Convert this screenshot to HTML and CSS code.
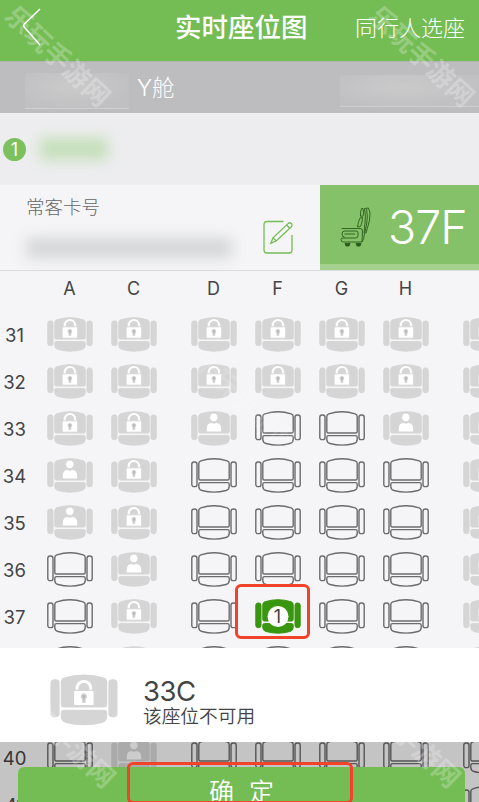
FILE: index.html
```
<!DOCTYPE html>
<html lang="zh-CN">
<head>
    <meta charset="UTF-8">
    <meta name="viewport" content="width=device-width, initial-scale=1.0">
    <title>实时座位图</title>
    <link rel="stylesheet" href="styles.css">
</head>
<body>
    <svg class="symbols">
        <symbol id="seat" viewBox="0 0 46 35">
            <rect x="0.8" y="4" width="5.2" height="24.6" rx="2.2"/>
            <rect x="40" y="4" width="5.2" height="24.6" rx="2.2"/>
            <path d="M7.8 5.6Q7.800 3.600 9.800 2.800Q23 -1.400 36.200 2.800Q38.200 3.600 38.200 5.600V20.500Q38.200 22 36.700 22H9.300Q7.800 22 7.800 20.500Z"/>
            <path d="M9.300 24.600H36.700Q38.200 24.600 38.200 26.200V28.600Q38.200 31.600 35 32.500Q23 35.800 11 32.500Q7.800 31.600 7.800 28.600V26.200Q7.800 24.600 9.300 24.600Z"/>
        </symbol>
        <symbol id="lock" viewBox="0 0 46 35">
            <path d="M17.700 11V8.200a5.200 5.200 0 0 1 10.400 0V11" fill="none" stroke="#fff" stroke-width="2.2"/>
            <rect x="15.100" y="9.800" width="15.600" height="11.400" rx="1" fill="#fff"/>
            <path d="M22.900 12.400a1.900 1.900 0 0 1 1 3.500l-.3 2.800h-1.400l-.3-2.800a1.900 1.900 0 0 1 1-3.500z" fill="#bbb"/>
        </symbol>
        <symbol id="person" viewBox="0 0 46 35">
            <circle cx="22.800" cy="6.400" r="4.300" fill="#fff"/>
            <path d="M15.200 21V18.400Q15.200 12 20.400 11.600Q22.800 12.800 25.200 11.600Q30.800 12 30.800 18.400V21Z" fill="#fff"/>
        </symbol>
    </svg>

    <div class="phone">
        <header class="navbar">
            <svg class="back" viewBox="0 0 20 40"><path d="M18 2L2.200 17.200Q1 18.600 2.200 20L18 38"/></svg>
            <h1>实时座位图</h1>
            <span class="nav-action">同行人选座</span>
        </header>
        <div class="flight-bar">
            <span class="masked masked-flight"></span>
            <span class="cabin">Y舱</span>
            <span class="masked masked-date"></span>
        </div>
        <div class="passenger">
            <span class="num">1</span>
            <span class="masked-name"></span>
        </div>
        <div class="card">
            <div class="card-info">
                <div class="card-text">
                    <span class="card-label">常客卡号</span>
                    <span class="masked-card"></span>
                </div>
                <svg class="edit" viewBox="0 0 32 36">
                    <path d="M21.500 2.500H5Q2 2.500 2 5.500V31Q2 34 5 34H27Q30 34 30 31V16"/>
                    <path d="M8.800 24.200L11 18.800L26 4.600A2.300 2.300 0 0 1 29.400 7.800L14.200 22ZM11 18.800L14.200 22M24.600 6L27.800 9.200"/>
                </svg>
            </div>
            <div class="card-seat">
                <svg class="chair" viewBox="0 0 32 42">
                    <path d="M24.500 1.500L28.500 1L30 6Q30 14 28 19L26 26H24L25 16Q26 9 24.500 1.500ZM26.500 2Q28 9 26.800 16L25 25"/>
                    <path d="M21.500 1.500H23Q24.200 5 23 9.200H20.500Q20 5 21.500 1.500Z"/>
                    <path d="M20 11L22.500 10.500Q22.500 15 20.500 19.500L17.500 20Q18 15 20 11Z"/>
                    <path d="M1.500 21.500H20Q22.500 21.500 22.500 24L22 35H3.500Q1 35 1 32.500Q1 31 3 31H15.500Q18 31 18 28.500V26Q18 24 16 24H4.500Q2 24 2 27T4.500 30M4.500 27H15M24.500 26Q24 33 22 35"/>
                    <path class="solid" d="M5 36.500H10L9 39H6ZM16 36.500H21L20 39H17Z"/>
                </svg>
                <span class="seat-no">37F</span>
            </div>
        </div>

        <div class="seat-map">
            <div class="row row-head">
                <span></span><span>A</span><span>C</span><span>D</span><span>F</span><span>G</span><span>H</span>
            </div>
            <div id="rows"></div>
        </div>

        <div class="mask"></div>
        <div class="seat-tip">
            <svg class="tip-seat taken" viewBox="0 0 46 35"><use href="#seat"/><use href="#lock" class="tip-lock"/></svg>
            <div class="tip-text">
                <span class="tip-no">33C</span>
                <span class="tip-msg">该座位不可用</span>
            </div>
        </div>
        <button class="confirm">确 定</button>

        <div class="mark mark-seat"></div>
        <div class="mark mark-confirm"></div>

        <div class="watermark wm-top-left">乐玩手游网</div>
        <div class="watermark wm-top-right">乐玩手游网</div>
        <div class="watermark wm-middle">乐玩手游网</div>
        <div class="watermark wm-bottom-left">乐玩手游网</div>
        <div class="watermark wm-bottom-right">乐玩手游网</div>
    </div>

    <script>
        // L = locked, P = occupied, O = free, S = selected
        const seatRows = {
            31: "LLLLLLL",
            32: "LLLLLLL",
            33: "LLPOOPL",
            34: "PLOOOOL",
            35: "PLOOOOL",
            36: "OPOOOOL",
            37: "OLOSOOL",
            38: "OLOOOOL",
            39: "OLOOOOL",
            40: "OPOOOOO",
            41: "OOOOOOO"
        };

        function seatSvg(type) {
            const cls = { L: "taken", P: "taken", O: "free", S: "selected" }[type];
            let inner = '<use href="#seat"/>';
            if (type === "L") inner += '<use href="#lock"/>';
            if (type === "P") inner += '<use href="#person"/>';
            if (type === "S") inner += '<circle cx="23" cy="17.500" r="10.500"/><text x="22.500" y="24" text-anchor="middle">1</text>';
            return `<svg class="seat ${cls}" viewBox="0 0 46 35">${inner}</svg>`;
        }

        document.getElementById("rows").innerHTML = Object.keys(seatRows).map(n =>
            `<div class="row"><span class="row-no">${n}</span>${[...seatRows[n]].map(seatSvg).join("")}</div>`
        ).join("");
    </script>
</body>
</html>
```

FILE: styles.css
```
* {
    box-sizing: border-box;
}
body {
    margin: 0;
    font-family: Inter, "Noto Sans CJK SC", sans-serif;
    color: #444;
}
.symbols {
    position: absolute;
    width: 0;
    height: 0;
}
.phone {
    position: relative;
    width: 479px;
    height: 802px;
    overflow: hidden;
    background: #f5f5f7;
}
.navbar {
    display: flex;
    align-items: center;
    height: 61px;
    padding: 0 14px 7px 22px;
    background: #74bc54;
    color: #fff;
}
.back {
    width: 20px;
    height: 40px;
    fill: none;
    stroke: #fff;
    stroke-width: 1.6;
}
.navbar h1 {
    flex: 1;
    margin: 0 0 0 133px;
    font-size: 26.5px;
    font-weight: 500;
    line-height: 40px;
}
.nav-action {
    padding-bottom: 3px;
    font-size: 22px;
    font-weight: 300;
}
.flight-bar {
    display: flex;
    align-items: center;
    height: 52px;
    padding-left: 25px;
    background: #bdbdbf;
    border-top: 1px solid #b1b5b0;
    color: #fff;
}
.masked {
    height: 36px;
    margin-top: 6px;
    border-bottom: 1px solid #cfcfd1;
    background: radial-gradient(ellipse at 45% 40%, #c9c9ca 10%, #c0c0c2 75%);
}
.masked-flight {
    width: 104px;
}
.cabin {
    flex: 1;
    padding: 0 0 3px 8px;
    font-size: 22.5px;
    font-weight: 300;
}
.masked-date {
    width: 139px;
    height: 32px;
}
.passenger {
    display: flex;
    align-items: center;
    height: 72px;
    padding-left: 3px;
    background: #ededef;
}
.num {
    width: 23px;
    height: 23px;
    border-radius: 50%;
    background: #7dc05e;
    color: #fff;
    font-size: 18px;
    line-height: 23px;
    text-align: center;
}
.masked-name {
    width: 68px;
    height: 22px;
    margin-left: 14px;
    background: #c5dfb9;
    filter: blur(7px);
}
.card {
    display: flex;
    height: 86px;
    border-bottom: 1px solid #dcdcde;
}
.card-info {
    display: flex;
    width: 320px;
    padding: 8px 0 0 26px;
}
.card-text {
    display: flex;
    flex-direction: column;
    width: 236px;
}
.card-label {
    font-size: 18.5px;
    font-weight: 300;
    line-height: 28px;
    color: #666;
}
.masked-card {
    width: 206px;
    height: 20px;
    margin-top: 17px;
    background: #d5d6d8;
    filter: blur(7px);
}
.edit {
    width: 32px;
    height: 36px;
    margin-top: 26px;
    fill: none;
    stroke: #74bc54;
    stroke-width: 1.3;
}
.card-seat {
    display: flex;
    width: 159px;
    height: 85px;
    padding-left: 20px;
    background: #84c168;
    border-bottom: 6px solid #a4d18d;
    color: #fff;
}
.chair {
    width: 32px;
    height: 42px;
    margin-top: 22px;
    fill: none;
    stroke: #285c18;
    stroke-width: 0.9;
}
.chair .solid {
    fill: #285c18;
}
.seat-no {
    margin-left: 16px;
    font-size: 46.5px;
    font-weight: 350;
    line-height: 85px;
    letter-spacing: -1px;
}
.row {
    display: grid;
    grid-template-columns: 46.5px 64px 80px 64px 64px 64px 80px 46px;
    align-items: center;
    height: 46.95px;
}
.row-head {
    height: 40px;
    font-size: 18px;
}
.row-head span {
    width: 46px;
    padding-bottom: 6px;
    text-align: center;
}
.row-no {
    width: 29px;
    padding-top: 2px;
    text-align: center;
    font-size: 18.5px;
}
.seat {
    width: 46px;
    height: 35px;
}
.taken {
    fill: #d5d5d5;
    stroke: #d5d5d5;
    stroke-width: 1;
}
.free {
    fill: none;
    stroke: #6c6c6c;
    stroke-width: 1.4;
}
.selected {
    fill: #38960f;
    stroke: #38960f;
    stroke-width: 1;
}
.selected circle {
    fill: #fff;
    stroke: none;
}
.selected text {
    fill: #444;
    stroke: none;
    font-size: 18px;
}
.mask {
    position: absolute;
    left: 0;
    top: 742px;
    width: 100%;
    height: 60px;
    background: rgba(0, 0, 0, 0.2);
}
.seat-tip {
    position: absolute;
    left: 0;
    top: 648px;
    display: flex;
    width: 100%;
    height: 94px;
    padding: 26px 0 0 50px;
    background: #fff;
}
.tip-seat {
    width: 68px;
    height: 52px;
}
.tip-lock {
    transform: translate(2.3px, 2.2px) scale(0.9);
}
.tip-text {
    display: flex;
    flex-direction: column;
    margin-left: 25px;
}
.tip-no {
    font-size: 27.5px;
    line-height: 34px;
    letter-spacing: -0.5px;
}
.tip-msg {
    font-size: 18.7px;
    font-weight: 350;
    line-height: 18px;
}
.confirm {
    position: absolute;
    left: 18px;
    top: 767px;
    width: 447px;
    height: 50px;
    padding: 0;
    border: none;
    border-radius: 6px 6px 0 0;
    background: #74bc54;
    color: #fff;
    font-family: inherit;
    font-size: 25px;
    font-weight: 350;
    line-height: 44px;
    word-spacing: 8px;
}
.mark {
    position: absolute;
    border: 3px solid #f0432a;
    border-radius: 6px;
}
.mark-seat {
    left: 235px;
    top: 584px;
    width: 75px;
    height: 55px;
}
.mark-confirm {
    left: 127px;
    top: 762px;
    width: 226px;
    height: 42px;
}
.watermark {
    position: absolute;
    width: 140px;
    height: 30px;
    font-size: 26.5px;
    font-weight: 700;
    line-height: 30px;
    text-align: center;
    color: rgba(255, 255, 255, 0.25);
    transform: rotate(43.5deg);
}
.wm-top-left {
    left: -12px;
    top: 41px;
}
.wm-top-right {
    left: 352px;
    top: 41px;
}
.wm-middle {
    left: 176px;
    top: 386px;
    color: rgba(255, 255, 255, 0.15);
}
.wm-bottom-left {
    left: -7px;
    top: 722px;
}
.wm-bottom-right {
    left: 338px;
    top: 722px;
}
```
